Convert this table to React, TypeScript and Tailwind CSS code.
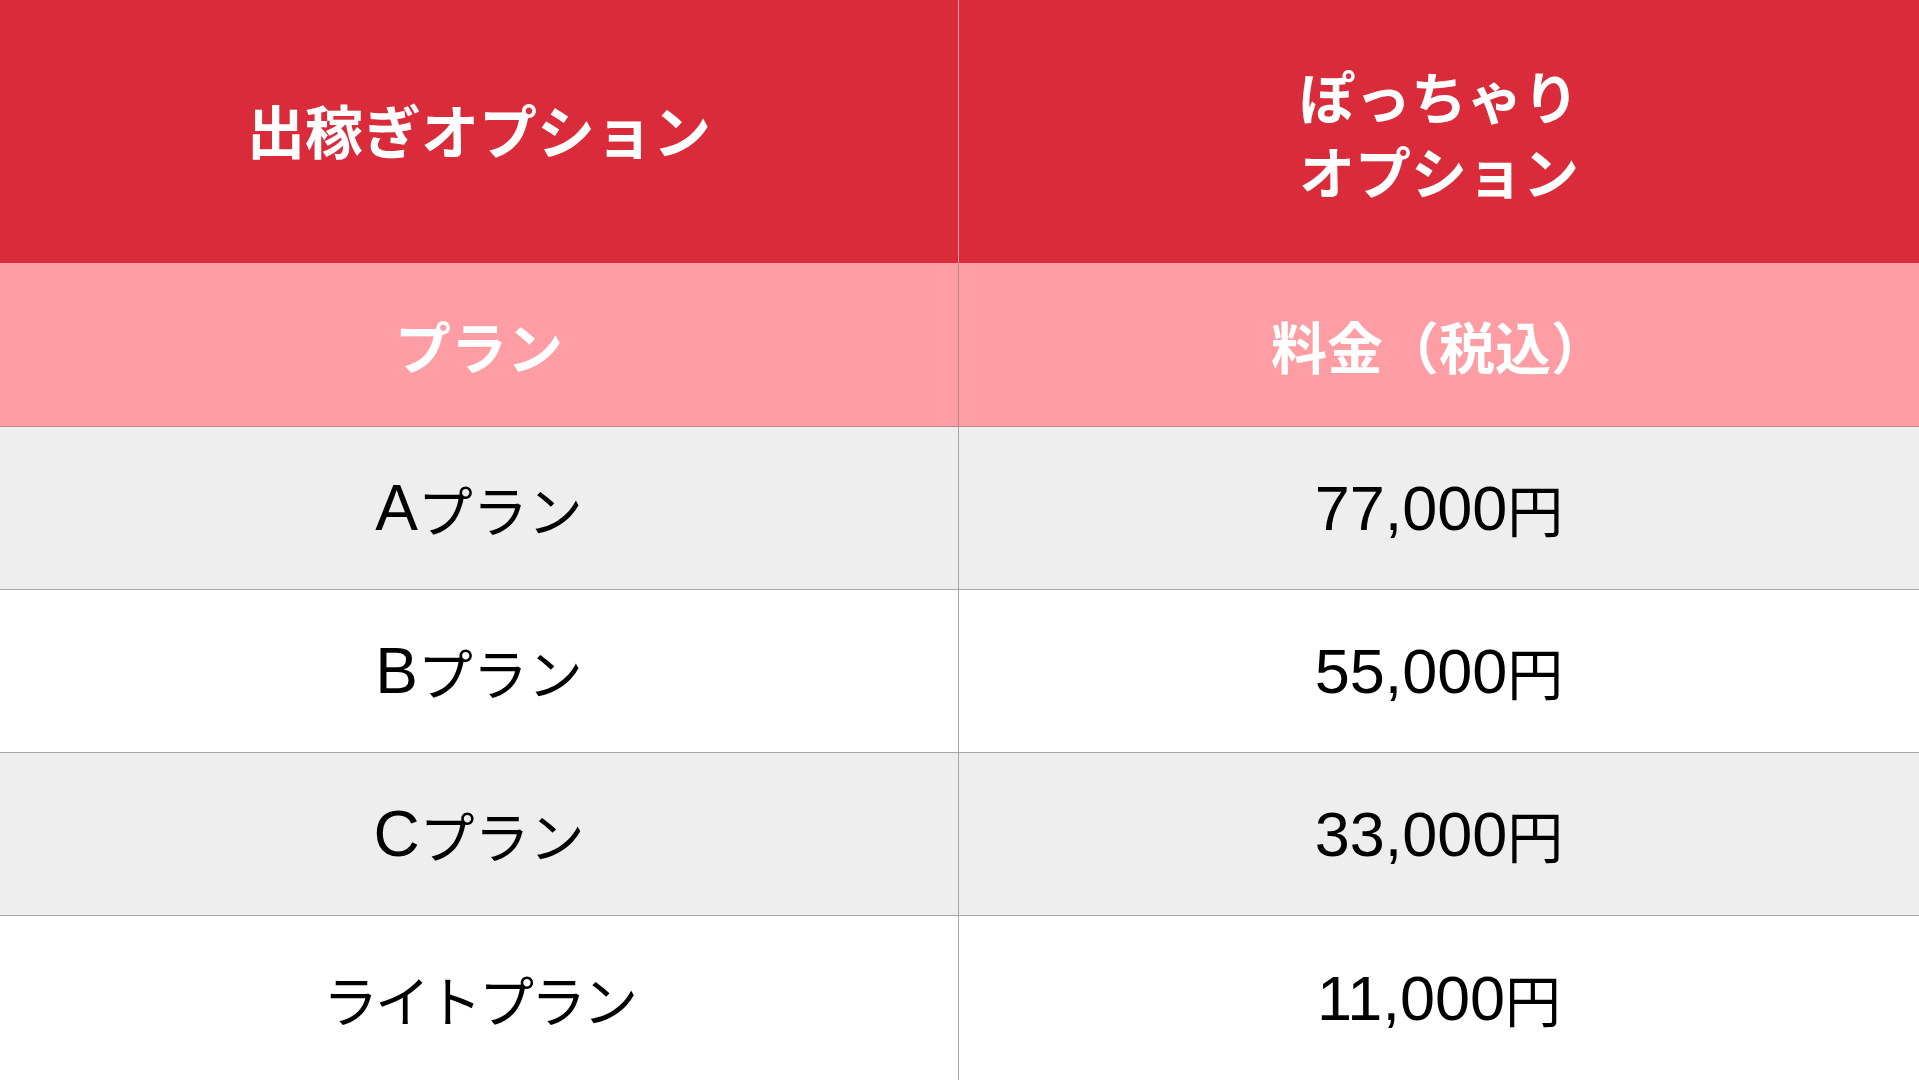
const rows = [
  { plan: 'A', kana: 'プラン', price: '77,000', bg: 'bg-[#eeeeee]', h: 'h-[163px]', tight: false },
  { plan: 'B', kana: 'プラン', price: '55,000', bg: 'bg-white', h: 'h-[163px]', tight: false },
  { plan: 'C', kana: 'プラン', price: '33,000', bg: 'bg-[#eeeeee]', h: 'h-[163px]', tight: false },
  { plan: '', kana: 'ライトプラン', price: '11,000', bg: 'bg-white', h: 'h-[164px]', tight: true },
];

const jp = { fontFamily: '"Noto Sans CJK JP", "Noto Sans", sans-serif' };
const latin = { fontFamily: '"Liberation Sans", "Noto Sans CJK JP", sans-serif' };

export default function App() {
  return (
    <div className="w-[1919px] h-[1080px] overflow-hidden bg-white" style={jp}>
      {/* Header */}
      <div className="flex h-[263px] bg-[#da2b3b] text-white font-bold">
        <div className="w-[959px] flex items-center justify-center pb-[6px] border-r border-[#e8a0a6] text-[58px] leading-none">
          出稼ぎオプション
        </div>
        <div className="flex-1 flex flex-col items-center justify-center text-[56px] leading-[75px]">
          <span>ぽっちゃり</span>
          <span>オプション</span>
        </div>
      </div>

      {/* Sub header */}
      <div className="flex h-[164px] bg-[#ff9da4] text-white font-bold text-[56px] leading-none border-b border-[#b8888c]">
        <div className="w-[959px] flex items-center justify-center border-r border-[#b8888c]">
          プラン
        </div>
        <div className="flex-1 flex items-center justify-center">料金（税込）</div>
      </div>

      {/* Body */}
      {rows.map((r, i) => (
        <div
          key={i}
          className={`flex ${r.h} ${r.bg} text-black leading-none ${i < rows.length - 1 ? 'border-b border-[#a6a6a6]' : ''}`}
        >
          <div className="w-[959px] flex items-center justify-center border-r border-[#a6a6a6]">
            {r.plan && (
              <span className="text-[64px]" style={latin}>
                {r.plan}
              </span>
            )}
            <span className={r.tight ? 'text-[55px] tracking-[-3px]' : 'text-[55px]'}>{r.kana}</span>
          </div>
          <div className="flex-1 flex items-center justify-center">
            <span className="text-[63px]" style={latin}>
              {r.price}
            </span>
            <span className="text-[56px]">円</span>
          </div>
        </div>
      ))}
    </div>
  );
}
